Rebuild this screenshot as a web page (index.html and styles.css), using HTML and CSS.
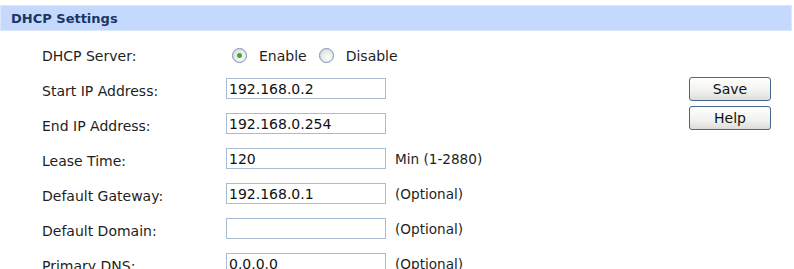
FILE: index.html
```html
<!DOCTYPE html>
<html lang="en">
<head>
  <meta charset="UTF-8" />
  <title>DHCP Settings</title>
  <link rel="stylesheet" href="styles.css">
</head>
<body>
  <div class="panel">
    <div class="panel-title">DHCP Settings</div>
    <div class="panel-body">
      <div class="form">
        <label class="lbl">DHCP Server:</label>
        <div class="val radios">
          <input type="radio" name="dhcp" id="en" checked><label for="en" class="opt">Enable</label>
          <input type="radio" name="dhcp" id="dis"><label for="dis" class="opt">Disable</label>
        </div>

        <label class="lbl">Start IP Address:</label>
        <div class="val"><input type="text" value="192.168.0.2"></div>

        <label class="lbl">End IP Address:</label>
        <div class="val"><input type="text" value="192.168.0.254"></div>

        <label class="lbl">Lease Time:</label>
        <div class="val"><input type="text" value="120"><span class="hint">Min (1-2880)</span></div>

        <label class="lbl">Default Gateway:</label>
        <div class="val"><input type="text" value="192.168.0.1"><span class="hint">(Optional)</span></div>

        <label class="lbl">Default Domain:</label>
        <div class="val"><input type="text" value=""><span class="hint">(Optional)</span></div>

        <label class="lbl">Primary DNS:</label>
        <div class="val"><input type="text" value="0.0.0.0"><span class="hint">(Optional)</span></div>
      </div>
      <div class="actions">
        <button>Save</button>
        <button>Help</button>
      </div>
    </div>
  </div>
</body>
</html>
```

FILE: styles.css
```css
body { margin: 0; padding-top: 5px; background: #fff; font-family: "DejaVu Sans", Verdana, sans-serif; font-size: 14px; color: #1e1e1e; }
.panel { width: 792px; }
.panel-title { height: 24px; line-height: 25px; padding-left: 10px; background: #c5d9ff; border: 1px solid #dde8ff; font-size: 13px; font-weight: bold; color: #1b3565; }
.panel-body { display: flex; padding-top: 5px; }
.form { display: grid; grid-template-columns: 184px 1fr; grid-auto-rows: 35px; padding-left: 42px; width: 420px; }
.lbl, .val { display: flex; align-items: center; white-space: nowrap; }
.lbl { padding-top: 5px; }
.radios { padding-top: 4px; }
input[type="text"] { width: 160px; height: 21px; box-sizing: border-box; margin: 0; padding: 1px 2px 0; border: 1px solid #a7bcd3; font-family: inherit; font-size: 14px; color: #111; }
.hint { margin-left: 9px; padding-top: 1px; font-size: 13.6px; }
input[type="radio"] { appearance: none; width: 15px; height: 15px; margin: 0 0 0 6px; border: 1px solid #7a93b3; border-radius: 50%; background: radial-gradient(circle at 60% 65%, #ffffff 0%, #e6e6e6 55%, #cfd3d8 100%); display: grid; place-items: center; }
input[type="radio"]:checked::after { content: ""; width: 5px; height: 5px; border-radius: 50%; background: #2db52d; }
.opt { margin-left: 12px; margin-right: 6px; }
.actions { display: flex; flex-direction: column; gap: 5px; margin-left: 227px; padding-top: 41px; }
button { width: 82px; height: 24px; border: 1px solid #47668f; border-radius: 3px; background: linear-gradient(#ffffff, #f1f1ef 60%, #dedcd6); font-family: inherit; font-size: 14px; color: #111; padding: 0; }
```
